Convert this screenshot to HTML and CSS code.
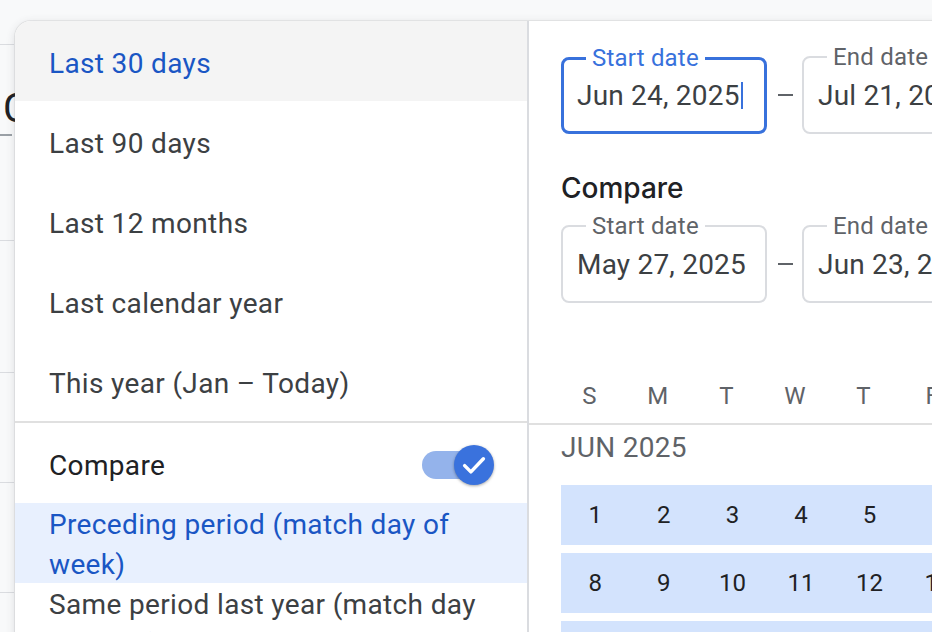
FILE: index.html
```html
<!DOCTYPE html>
<html lang="en">
<head>
<meta charset="utf-8">
<title>Date range picker</title>
<link rel="stylesheet" href="styles.css">
</head>
<body>
<div class="backdrop">
  <div class="bd-row bd-top"></div>
  <div class="bd-row bd-title">C</div>
  <div class="bd-row bd-r3"></div>
  <div class="bd-row bd-r4"></div>
  <div class="bd-row bd-r5"></div>
  <div class="bd-row bd-r5"></div>
</div>

<div class="picker">
  <div class="presets">
    <div class="preset active">Last 30 days</div>
    <div class="preset">Last 90 days</div>
    <div class="preset">Last 12 months</div>
    <div class="preset">Last calendar year</div>
    <div class="preset">This year (Jan – Today)</div>
    <div class="compare-row">
      <span>Compare</span>
      <span class="toggle">
        <span class="track"></span>
        <span class="thumb">
          <svg viewBox="0 0 24 24" width="30" height="30"><path d="M4.5 12.5l5 5L19.5 7" fill="none" stroke="#fff" stroke-width="2.8" stroke-linecap="round" stroke-linejoin="round"/></svg>
        </span>
      </span>
    </div>
    <div class="preset multi selected">Preceding period (match day of week)</div>
    <div class="preset multi">Same period last year (match day of week)</div>
  </div>

  <div class="pane">
    <div class="field-row">
      <div class="field focused">
        <span class="field-label">Start date</span>
        <span class="value">Jun 24, 2025</span><span class="caret"></span>
      </div>
      <span class="dash"></span>
      <div class="field wide">
        <span class="field-label">End date</span>
        <span class="value">Jul 21, 2025</span>
      </div>
    </div>

    <div class="compare-title">Compare</div>

    <div class="field-row">
      <div class="field">
        <span class="field-label">Start date</span>
        <span class="value">May 27, 2025</span>
      </div>
      <span class="dash"></span>
      <div class="field wide">
        <span class="field-label">End date</span>
        <span class="value">Jun 23, 2025</span>
      </div>
    </div>

    <div class="cal-head">
      <div class="weekdays">
        <span>S</span><span>M</span><span>T</span><span>W</span><span>T</span><span>F</span><span>S</span>
      </div>
    </div>

    <div class="month-label">JUN 2025</div>
    <div class="week first"><span>1</span><span>2</span><span>3</span><span>4</span><span>5</span><span>6</span><span>7</span></div>
    <div class="week"><span>8</span><span>9</span><span>10</span><span>11</span><span>12</span><span>13</span><span>14</span></div>
    <div class="week"><span>15</span><span>16</span><span>17</span><span>18</span><span>19</span><span>20</span><span>21</span></div>
  </div>
</div>
</body>
</html>
```

FILE: styles.css
```css
html, body {
  margin: 0;
  width: 932px;
  height: 632px;
  overflow: hidden;
}

body {
  position: relative;
  background: #f8f9fa;
  font-family: Roboto, "Noto Sans", Arial, sans-serif;
}

/* content behind the popup */
.backdrop {
  width: 14px;
  display: flex;
  flex-direction: column;
}

.bd-row {
  flex: none;
  border-bottom: 1px solid #dadce0;
}

.bd-top { height: 44px; }

.bd-title {
  height: 91px;
  border-bottom: 2px solid #9aa0a6;
  width: 12px;
  font-size: 40px;
  line-height: 40px;
  padding-top: 44px;
  box-sizing: border-box;
  padding-left: 3px;
  color: #202124;
  white-space: nowrap;
}

.bd-r3 { height: 104px; }
.bd-r4 { height: 131px; }
.bd-r5 { height: 109px; }

/* popup */
.picker {
  position: absolute;
  left: 15px;
  top: 21px;
  width: 1100px;
  height: 700px;
  background: #fff;
  border-top-left-radius: 16px;
  box-shadow: 0 0 0 1px rgba(60, 64, 67, 0.08), 0 2px 10px rgba(60, 64, 67, 0.16);
  display: flex;
  overflow: hidden;
}

.presets {
  flex: none;
  width: 512px;
  border-right: 2px solid #dadce0;
}

.preset {
  box-sizing: border-box;
  height: 80px;
  display: flex;
  align-items: center;
  padding: 4px 40px 0 34px;
  font-size: 28px;
  color: #3c4043;
  letter-spacing: 0.35px;
}

.preset.multi {
  display: block;
  line-height: 40px;
  padding-top: 2px;
}

.preset.multi:last-child {
  height: auto;
}

.preset.active {
  background: #f4f4f4;
  color: #1a56c4;
}

.preset.selected {
  background: #e8f0fe;
  color: #1a56c4;
}

.compare-row {
  box-sizing: border-box;
  height: 82px;
  border-top: 2px solid #e0e0e0;
  display: flex;
  align-items: center;
  justify-content: space-between;
  padding: 5px 33px 0 34px;
  font-size: 28px;
  color: #202124;
  letter-spacing: 0.35px;
}

.toggle {
  position: relative;
  width: 72px;
  height: 40px;
  margin-top: -2px;
}

.track {
  position: absolute;
  left: 0;
  top: 6px;
  width: 58px;
  height: 28px;
  border-radius: 14px;
  background: #94b3eb;
}

.thumb {
  position: absolute;
  right: 0;
  top: 0;
  width: 40px;
  height: 40px;
  border-radius: 50%;
  background: #3a72dd;
  box-shadow: 0 1px 3px rgba(0, 0, 0, 0.35);
  display: flex;
  align-items: center;
  justify-content: center;
}

/* right pane */
.pane {
  flex: 1;
  padding: 35px 0 0 32px;
}

.field-row {
  display: flex;
  align-items: center;
}

.field {
  position: relative;
  flex: none;
  box-sizing: border-box;
  width: 206px;
  height: 78px;
  border: 2px solid #dadce0;
  border-radius: 8px;
  display: flex;
  align-items: center;
  padding: 1px 0 0 14px;
  font-size: 28px;
  color: #3c4043;
  white-space: nowrap;
  letter-spacing: 0.2px;
}

.field.wide { width: 220px; }

.field.focused {
  height: 77px;
  border: 3px solid #3871dc;
  padding-left: 13px;
}

.field-label {
  position: absolute;
  top: -13px;
  left: 23px;
  padding: 0 6px;
  background: #fff;
  font-size: 24px;
  line-height: 24px;
  color: #5f6368;
  letter-spacing: 0.2px;
}

.field.focused .field-label {
  top: -14px;
  left: 22px;
  color: #3871dc;
}

.caret {
  width: 2px;
  height: 27px;
  background: #3871dc;
  margin-left: 1px;
}

.dash {
  flex: none;
  width: 15px;
  height: 2px;
  background: #5f6368;
  margin: 0 9px 0 11px;
}

.compare-title {
  font-family: Inter, Roboto, sans-serif;
  font-size: 28px;
  font-weight: 500;
  line-height: 40px;
  margin: 34px 0 17px;
  color: #202124;
}

.cal-head {
  margin: 73px 0 0 -32px;
  padding: 0 0 7px 26px;
  border-bottom: 2px solid #e0e0e0;
}

.weekdays {
  display: grid;
  grid-template-columns: repeat(7, 68.57px);
  line-height: 40px;
  font-size: 24px;
  color: #5f6368;
  text-align: center;
}

.month-label {
  margin-top: 3px;
  font-size: 28px;
  line-height: 40px;
  color: #5f6368;
  letter-spacing: 0.3px;
}

.week {
  display: grid;
  grid-template-columns: repeat(7, 68.57px);
  height: 60px;
  margin-top: 8px;
  align-items: center;
  text-align: center;
  background: #d3e3fd;
  font-size: 24px;
  color: #202124;
}

.week.first { margin-top: 17px; }
```
